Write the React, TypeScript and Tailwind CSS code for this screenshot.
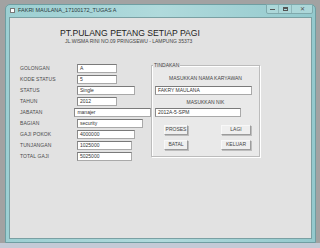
import React from "react";

const rows = [
  { label: "GOLONGAN", value: "A", w: "w-[40px]" },
  { label: "KODE STATUS", value: "5", w: "w-[40px]" },
  { label: "STATUS", value: "Single", w: "w-[58px]" },
  { label: "TAHUN", value: "2012", w: "w-[40px]" },
  { label: "JABATAN", value: "manajer", w: "w-[80px]" },
  { label: "BAGIAN", value: "security", w: "w-[66px]" },
  { label: "GAJI POKOK", value: "4000000", w: "w-[58px]" },
  { label: "TUNJANGAN", value: "1025000", w: "w-[55px]" },
  { label: "TOTAL GAJI", value: "5025000", w: "w-[55px]" },
];

const Field = ({ value, w }: { value: string; w: string }) => (
  <div
    className={`${w} h-[9px] bg-white border border-[#a9a9a9] border-t-[#7a7a7a] border-l-[#8a8a8a] pl-[2px] text-[5px] leading-[7px] text-[#333]`}
  >
    {value}
  </div>
);

const Btn = ({ label, w }: { label: string; w: string }) => (
  <div
    className={`${w} h-[10px] bg-[#efefef] border border-[#9c9c9c] border-t-[#f8f8f8] border-l-[#f8f8f8] shadow-[1px_1px_0_#bdbdbd] flex items-center justify-center text-[5px] text-[#444]`}
  >
    {label}
  </div>
);

export default function App() {
  return (
    <div
      className="w-[320px] h-[248px] bg-[#a2a2a2] flex flex-col overflow-hidden"
      style={{ fontFamily: '"Liberation Sans", Arial, sans-serif' }}
    >
      <div className="pl-[5px] pt-[4px]">
        {/* WINDOW */}
        <div className="w-[311px] h-[239px] bg-gradient-to-r from-[#9ccfd2] via-[#b0dadc] to-[#93c9cd] border border-[#6f9ea2] rounded-t-[5px] px-[3px] pb-[3px] flex flex-col">
          {/* TITLE BAR */}
          <div className="h-[12px] flex items-start">
            <div className="flex items-center mt-[3px] ml-[1px]">
              <div className="w-[5px] h-[5px] bg-white border border-[#777] mr-[3px]" />
              <span className="text-[5.5px] text-[#2c3a3c] leading-none">
                FAKRI MAULANA_17100172_TUGAS A
              </span>
            </div>
            <div className="ml-auto flex h-[10px] -mt-[1px] mr-[-1px] border border-[#7fa9ac] rounded-b-[2px] bg-[#acd7d9]">
              <div className="w-[12px] flex items-center justify-center border-r border-[#8fb7ba]">
                <div className="w-[5px] h-[1px] bg-[#555]" />
              </div>
              <div className="w-[13px] flex items-center justify-center border-r border-[#8fb7ba]">
                <div className="w-[5px] h-[4px] border border-[#555] border-t-2" />
              </div>
              <div className="w-[20px] flex items-center justify-center text-[6px] leading-none text-[#555]">
                ✕
              </div>
            </div>
          </div>

          {/* CLIENT */}
          <div className="flex-1 bg-[#e2e2e2] border border-[#7aa0a3]">
            <div className="ml-[50px] mt-[10px] text-[8.6px] leading-[10px] text-[#222]">
              PT.PULANG PETANG SETIAP PAGI
            </div>
            <div className="ml-[55px] text-[5px] leading-[6px] text-[#444]">
              JL.WISMA RINI NO.09 PRINGSEWU - LAMPUNG 35373
            </div>

            <div className="flex mt-[20px]">
              {/* FORM */}
              <div className="ml-[10px] w-[131px] flex flex-col gap-[2px]">
                {rows.map((r) => (
                  <div key={r.label} className="flex items-center h-[9px]">
                    <div className="w-[57px] text-[5px] leading-none tracking-[0.1px] text-[#4a4a4a]">
                      {r.label}
                    </div>
                    <Field value={r.value} w={r.w} />
                  </div>
                ))}
              </div>

              {/* TINDAKAN */}
              <div className="relative mt-[1px] w-[109px] h-[92px] border border-[#bcbcbc] shadow-[inset_1px_1px_0_#fff,1px_1px_0_#fff] bg-[#e9e9e9] flex flex-col items-center">
                <span className="absolute -top-[3px] left-[1px] bg-[#e2e2e2] px-[1px] text-[5px] leading-none text-[#444]">
                  TINDAKAN
                </span>
                <div className="mt-[9px] text-[5px] leading-[6px] text-[#444]">
                  MASUKKAN NAMA KARYAWAN
                </div>
                <div className="self-start ml-[3px] mt-[5px]">
                  <Field value="FAKRY MAULANA" w="w-[97px]" />
                </div>
                <div className="mt-[4px] text-[5px] leading-[6px] text-[#444]">
                  MASUKKAN NIK
                </div>
                <div className="self-start ml-[3px] mt-[3px]">
                  <Field value="2012A-5-SPM" w="w-[86px]" />
                </div>
                <div className="self-start ml-[12px] mt-[8px] grid grid-cols-[24px_30px] gap-x-[33px] gap-y-[5px]">
                  <Btn label="PROSES" w="w-[24px]" />
                  <Btn label="LAGI" w="w-[30px]" />
                  <Btn label="BATAL" w="w-[24px]" />
                  <Btn label="KELUAR" w="w-[30px]" />
                </div>
              </div>
            </div>
          </div>
        </div>
      </div>
      <div className="flex-1 bg-[#c3cad6]" />
    </div>
  );
}
